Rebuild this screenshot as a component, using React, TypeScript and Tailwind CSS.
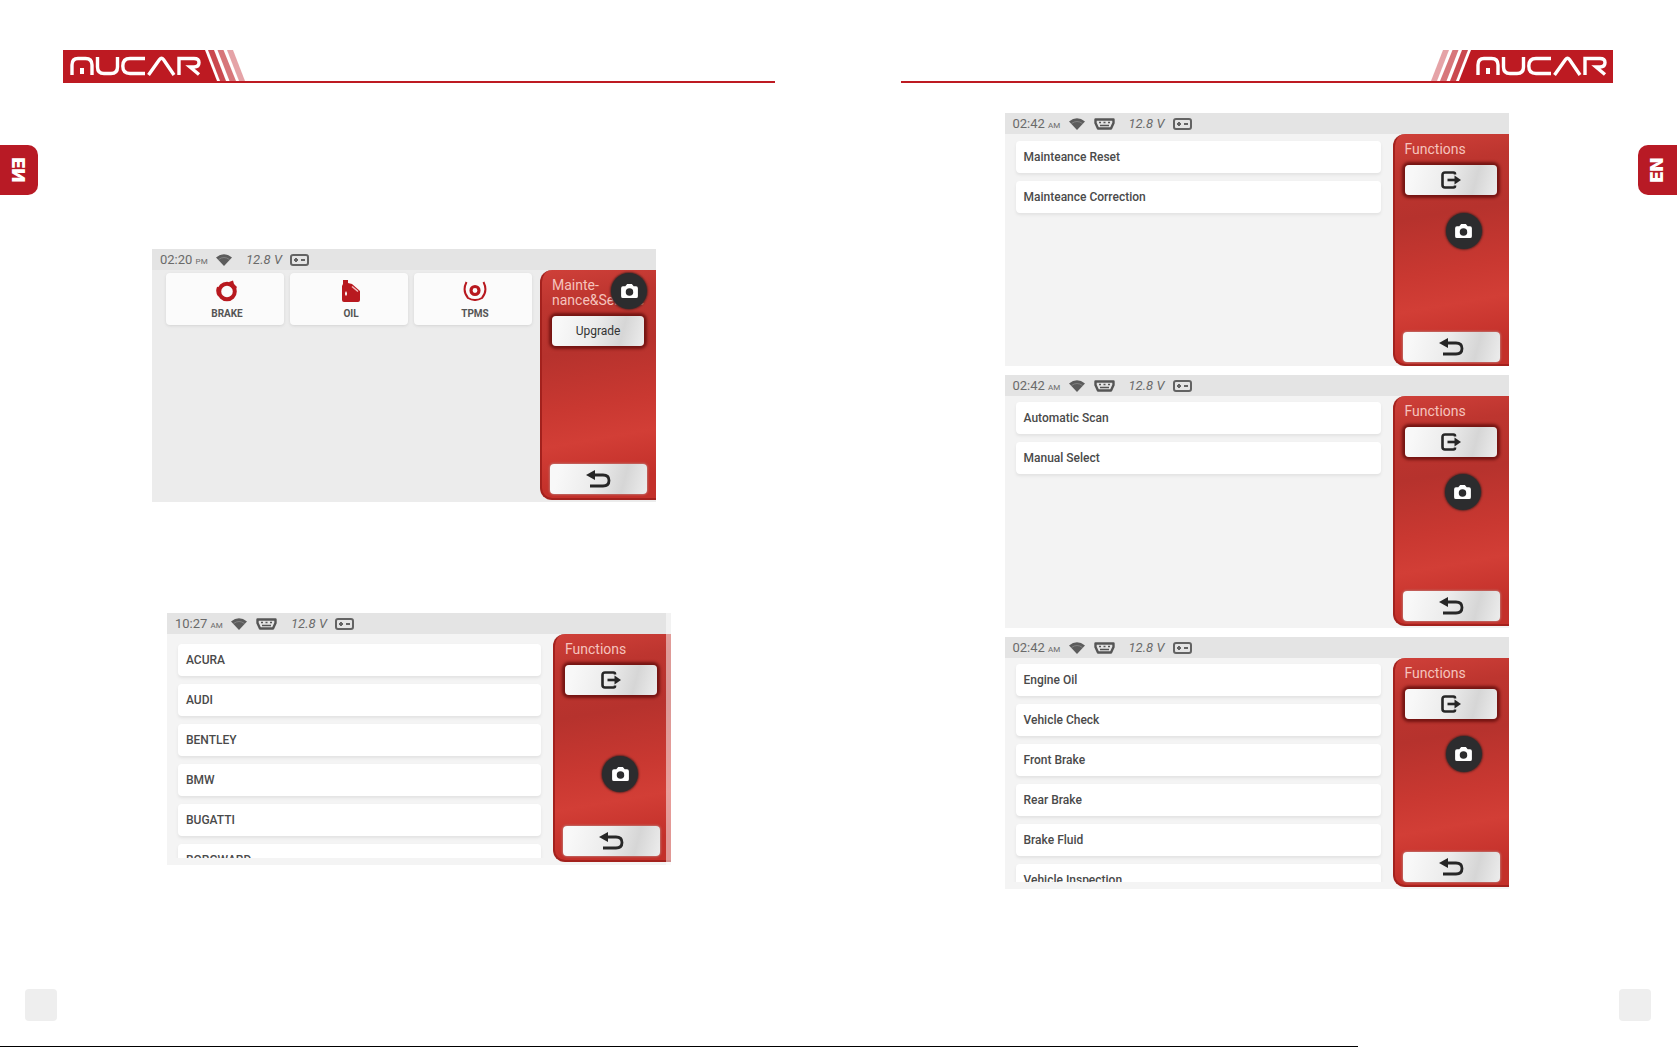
import type { ReactNode } from "react";

function WordMark({ shift }: { shift: number }) {
  return (
    <g transform={`translate(${shift} 0)`} fill="none" stroke="#fff" strokeWidth="3.400">
      <path d="M9 25V15Q9 8.500 15 8.500H22.500Q29 8.500 29 15V25" />
      <rect x="17" y="18" width="4" height="6" fill="#fff" stroke="none" />
      <path d="M34.500 7V17Q34.500 23.500 41 23.500H48Q54.500 23.500 54.500 17V7" />
      <path d="M82 8.500H67Q59.800 8.500 59.800 16Q59.800 23.500 67 23.500H82" />
      <path d="M85.500 25L96.500 9.500Q98.500 7 100.500 9.500L111 25" />
      <path d="M116 25V8.500H131Q136 8.500 136 12.500Q136 17 131 17H127L136 24.500" />
    </g>
  );
}

function Brand({ side }: { side: "left" | "right" }) {
  const right = side === "right";
  return (
    <header className={right ? "flex justify-end border-b-2 border-[#bd1a22]" : "flex border-b-2 border-[#bd1a22]"}>
      <svg role="img" aria-label="MUCAR" width="184" height="31" viewBox="0 0 184 31" className="block shrink-0">
        <g transform={right ? "translate(184 0) scale(-1 1)" : undefined} fill="#bd1a22">
          <path d="M0 0H142L154 31H0Z" />
          <path d="M145 0H151L163 31H157Z" opacity="0.8" />
          <path d="M154.500 0H160.500L173 31H166.500Z" opacity="0.6" />
          <path d="M164 0H170L182 31H176Z" opacity="0.4" />
        </g>
        <WordMark shift={right ? 40 : 0} />
      </svg>
    </header>
  );
}

function Wifi() {
  return (
    <svg width="16" height="12" viewBox="0 0 16 12" aria-hidden="true">
      <path d="M0 3.500Q8-3 16 3.500L8 12Z" fill="#5c5c5c" />
      <path d="M2.500 5.500Q8 1.500 13.500 5.500" fill="none" stroke="#8a8a8a" strokeWidth="0.800" />
    </svg>
  );
}

function Connector() {
  return (
    <svg width="21" height="12" viewBox="0 0 21 12" aria-hidden="true" fill="none" stroke="#555">
      <path d="M1.500 1.500H19.500V5L17 10.500H4L1.500 5Z" strokeWidth="2.400" strokeLinejoin="round" />
      <path d="M5 4.500H7M9.500 4.500H11.500M14 4.500H16M6 7.500H15" strokeWidth="1.500" />
    </svg>
  );
}

function Battery() {
  return (
    <svg width="19" height="12" viewBox="0 0 19 12" aria-hidden="true" fill="none" stroke="#636363">
      <rect x="1" y="1" width="17" height="10" rx="2" strokeWidth="2" />
      <path d="M4 6H8M6 4V8M11 6H15" strokeWidth="2" />
    </svg>
  );
}

function StatusBar({ time, suffix, connector }: { time: string; suffix: string; connector: boolean }) {
  return (
    <div className="flex h-[21px] shrink-0 items-center bg-[#e4e4e4] pl-2 text-[13px] leading-none text-[#6a6a6a]">
      <span className="w-[56px] whitespace-nowrap">
        {time} <span className="text-[8px]">{suffix}</span>
      </span>
      <Wifi />
      {connector && <span className="ml-[9px]"><Connector /></span>}
      <span className="ml-[14px] flex w-[36px] justify-between whitespace-nowrap italic">
        <span>12.8</span>
        <span>V</span>
      </span>
      <span className="ml-2"><Battery /></span>
    </div>
  );
}

function ExitIcon() {
  return (
    <svg width="20" height="18" viewBox="0 0 20 18" aria-hidden="true" fill="none" stroke="#262626" strokeWidth="2.600">
      <path d="M14 3.500V3Q14 1.500 12.500 1.500H4Q1.500 1.500 1.500 4V14Q1.500 16.500 4 16.500H12.500Q14 16.500 14 15V14.500" />
      <path d="M6.500 9H15" />
      <path d="M13.500 4.500L20 9L13.500 13.500Z" fill="#262626" stroke="none" />
    </svg>
  );
}

function BackIcon() {
  return (
    <svg width="25" height="18" viewBox="0 0 25 18" aria-hidden="true" fill="none" stroke="#262626" strokeWidth="2.800">
      <path d="M7 5H17Q23 5 23 10.500Q23 16 17 16H4" />
      <path d="M0 5L9 0V10Z" fill="#262626" stroke="none" />
    </svg>
  );
}

function CameraIcon() {
  return (
    <svg width="17" height="14" viewBox="0 0 18 15" aria-hidden="true">
      <path d="M2 2.500H4.500L6.500 0H11.500L13.500 2.500H16Q18 2.500 18 4.500V13Q18 15 16 15H2Q0 15 0 13V4.500Q0 2.500 2 2.500Z" fill="#fff" />
      <circle cx="9" cy="8.500" r="4" fill="#2c2c2e" />
    </svg>
  );
}

const metal = "bg-linear-[105deg,#f8f8f8_10%,#ececec_45%,#d6d6d6_75%,#ededed]";

function SidePanel({ title, action, camera, className }: { title: ReactNode; action: ReactNode; camera: string; className: string }) {
  return (
    <aside
      className={
        "relative flex shrink-0 flex-col rounded-l-xl border-b-2 border-l-2 border-[#a3211d] bg-linear-[170deg,#cf4039_0%,#bd352f_15%,#b6322d_35%,#c93831_58%,#d23e36_72%,#c3302a_90%] pl-2 pt-2 " +
        className
      }
    >
      <h2 className="pl-[2px] text-sm leading-[15px] text-[#f5c3bd]">{title}</h2>
      <button
        type="button"
        aria-label={typeof action === "string" ? undefined : "Exit"}
        className={"ml-[2px] mt-2 flex h-[30px] w-[92px] items-center justify-center rounded-[4px] text-xs text-[#333] shadow-[0_0_3px_3px_#741412] " + metal}
      >
        {action}
      </button>
      <button type="button" aria-label="Back" className={"mt-auto flex h-[30px] w-[97px] items-center justify-center rounded-[4px] shadow-[0_0_2px_1px_#bf6a65] " + metal}>
        <BackIcon />
      </button>
      <button type="button" aria-label="Screenshot" className={"absolute flex size-9 items-center justify-center rounded-full bg-[#2c2c2e] shadow-[0_0_2px_1px_#5b2422] " + camera}>
        <CameraIcon />
      </button>
    </aside>
  );
}

function ItemList({ items, className }: { items: string[]; className: string }) {
  return (
    <ul className={"flex min-w-0 flex-1 flex-col gap-2 overflow-hidden pl-[11px] pr-3 " + className}>
      {items.map((item) => (
        <li key={item} className="shrink-0">
          <button type="button" className="block h-8 w-full rounded-[4px] bg-white px-2 text-left text-xs font-medium text-[#4a4a4a] shadow-[0_2px_3px_#e2e2e2]">
            {item}
          </button>
        </li>
      ))}
    </ul>
  );
}

function Device({ time, suffix, connector = true, className, children }: { time: string; suffix: string; connector?: boolean; className: string; children: ReactNode }) {
  return (
    <section className={"relative flex w-full max-w-[504px] flex-col overflow-hidden " + className}>
      <StatusBar time={time} suffix={suffix} connector={connector} />
      <div className="flex min-h-0 flex-1">{children}</div>
    </section>
  );
}

function BrakeIcon() {
  return (
    <svg width="22" height="22" viewBox="0 0 22 22" aria-hidden="true">
      <circle cx="11" cy="11.500" r="7.800" fill="none" stroke="#b8191f" strokeWidth="4" />
      <path d="M13 2L17 0.500L18 4L21 7L19 10L15 7Z" fill="#b8191f" />
      <path d="M2 7Q0 12 3 16" fill="none" stroke="#b8191f" strokeWidth="2" />
    </svg>
  );
}

function OilIcon() {
  return (
    <svg width="18" height="22" viewBox="0 0 18 22" aria-hidden="true">
      <path d="M1 0H6V3L10 4L18 11V20Q18 22 16 22H2Q0 22 0 20V6L1 4Z" fill="#b8191f" />
      <path d="M10 6.500L16 11.500" stroke="#f4c4c4" strokeWidth="1.500" />
      <path d="M4 11Q6 14 4 16Q2 14 4 11Z" fill="#fff" />
    </svg>
  );
}

function TpmsIcon() {
  return (
    <svg width="24" height="20" viewBox="0 0 24 20" aria-hidden="true" fill="none" stroke="#b8191f" strokeWidth="2">
      <circle cx="12" cy="9.500" r="4" strokeWidth="3.200" />
      <path d="M3.500 1Q-1 10 5 17Q12 21 19 17Q25 10 20.500 1" />
    </svg>
  );
}

const services = [
  { name: "BRAKE", icon: <BrakeIcon /> },
  { name: "OIL", icon: <OilIcon /> },
  { name: "TPMS", icon: <TpmsIcon /> },
];

function ServiceGrid() {
  return (
    <div className="grid min-w-0 flex-1 grid-cols-3 content-start gap-[6px] pl-[14px] pr-2 pt-[3px]">
      {services.map(({ name, icon }) => (
        <button key={name} type="button" className="flex h-[52px] flex-col items-center rounded-[4px] bg-[#fbfbfb] pl-1 pt-[7px] text-[10px] font-bold leading-3 text-[#555] shadow-[0_1px_3px_#d4d4d4]">
          <span className="flex h-[22px] items-center">{icon}</span>
          <span className="mt-[6px]">{name}</span>
        </button>
      ))}
    </div>
  );
}

function LanguageTab({ side }: { side: "left" | "right" }) {
  const left = side === "left";
  return (
    <div
      className={
        left
          ? "mt-[145px] flex h-[50px] w-[38px] items-center justify-center self-start rounded-r-[10px] bg-[#b81a25]"
          : "mt-[145px] flex h-[50px] w-[39px] items-center justify-center self-end rounded-l-[10px] bg-[#b81a25]"
      }
    >
      <span
        className={
          left
            ? "-rotate-90 -scale-x-100 font-[Inter,sans-serif] text-lg font-black leading-none text-white"
            : "-rotate-90 font-[Inter,sans-serif] text-lg font-black leading-none text-white"
        }
      >
        EN
      </span>
    </div>
  );
}

export default function App() {
  return (
    <div className="flex min-h-screen flex-col bg-white font-[Roboto,sans-serif]">
      <main className="grid flex-1 grid-cols-2">
        <article className="flex">
          <div className="flex w-[63px] shrink-0 flex-col justify-between">
            <LanguageTab side="left" />
            <div className="mb-[25px] ml-[25px] size-8 rounded-[4px] bg-[#eee]" />
          </div>
          <div className="mr-16 min-w-0 flex-1 pt-[50px]">
            <Brand side="left" />
            <Device time="02:20" suffix="PM" connector={false} className="ml-[89px] mt-[166px] h-[253px] bg-[#ececec]">
              <ServiceGrid />
              <SidePanel title={<>Mainte-<br />nance&amp;Service</>} action="Upgrade" camera="left-[69px] top-[3px]" className="mb-[2px] w-[116px] pb-1" />
            </Device>
            <Device time="10:27" suffix="AM" className="ml-[104px] mt-[111px] h-[252px] bg-[#f4f4f4]">
              <ItemList items={["ACURA", "AUDI", "BENTLEY", "BMW", "BUGATTI", "BORGWARD"]} className="mb-[7px] pt-[10px]" />
              <SidePanel title="Functions" action={<ExitIcon />} camera="left-[47px] top-[122px]" className="mb-[3px] w-[118px] pb-1" />
              <div className="pointer-events-none absolute inset-y-0 right-0 w-[5px] bg-white/50" />
            </Device>
          </div>
        </article>

        <article className="flex">
          <div className="ml-[62px] min-w-0 flex-1 pt-[50px]">
            <Brand side="right" />
            <div className="ml-[104px] mt-[30px] flex flex-col gap-[9px]">
              <Device time="02:42" suffix="AM" className="h-[253px] bg-[#f3f3f3]">
                <ItemList items={["Mainteance Reset", "Mainteance Correction"]} className="pt-[7px]" />
                <SidePanel title="Functions" action={<ExitIcon />} camera="left-[51px] top-[79px]" className="w-[116px] pb-[2px]" />
              </Device>
              <Device time="02:42" suffix="AM" className="h-[253px] bg-[#f3f3f3]">
                <ItemList items={["Automatic Scan", "Manual Select"]} className="pt-[6px]" />
                <SidePanel title="Functions" action={<ExitIcon />} camera="left-[50px] top-[78px]" className="mb-[2px] w-[116px] pb-[3px]" />
              </Device>
              <Device time="02:42" suffix="AM" className="h-[252px] bg-[#f4f4f4]">
                <ItemList items={["Engine Oil", "Vehicle Check", "Front Brake", "Rear Brake", "Brake Fluid", "Vehicle Inspection"]} className="mb-[7px] pt-[6px]" />
                <SidePanel title="Functions" action={<ExitIcon />} camera="left-[51px] top-[78px]" className="mb-[2px] w-[116px] pb-[3px]" />
              </Device>
            </div>
          </div>
          <div className="flex w-16 shrink-0 flex-col justify-between">
            <LanguageTab side="right" />
            <div className="mb-[25px] ml-[6px] size-8 rounded-[4px] bg-[#eee]" />
          </div>
        </article>
      </main>
      <div className="h-px w-[81%] bg-black" />
    </div>
  );
}
